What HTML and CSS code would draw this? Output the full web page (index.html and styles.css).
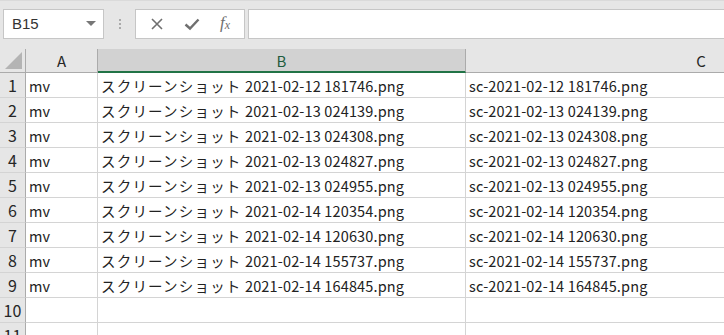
FILE: index.html
```html
<!DOCTYPE html>
<html lang="ja">

<head>
  <meta charset="UTF-8">
  <meta name="viewport" content="width=device-width, initial-scale=1.0">
  <title>Sheet</title>
  <link rel="stylesheet" href="styles.css">
</head>

<body>
  <div class="bar">
    <div class="namebox">
      <span>B15</span>
      <span class="caret"></span>
    </div>
    <div class="grip"><i></i><i></i><i></i></div>
    <div class="fbtns">
      <svg width="14" height="14" viewBox="0 0 14 14"><path d="M2 2 L12 12 M12 2 L2 12" stroke="#6f6f6f" stroke-width="1.6" fill="none"/></svg>
      <svg width="16" height="14" viewBox="0 0 16 14"><path d="M1.5 7.5 L6 11.5 L14.5 2.5" stroke="#6f6f6f" stroke-width="2.4" fill="none"/></svg>
      <span class="fx">f<sub>x</sub></span>
    </div>
    <div class="finput"></div>
  </div>

  <div class="sheet">
    <div class="hd corner"><span class="tri"></span></div>
    <div class="hd">A</div>
    <div class="hd sel">B</div>
    <div class="hd col-c">C</div>

    <div class="rn">1</div><div class="c">mv</div><div class="c"><span class="k">スクリーンショット</span> 2021-02-12 181746.png</div><div class="c">sc-2021-02-12 181746.png</div>
    <div class="rn">2</div><div class="c">mv</div><div class="c"><span class="k">スクリーンショット</span> 2021-02-13 024139.png</div><div class="c">sc-2021-02-13 024139.png</div>
    <div class="rn">3</div><div class="c">mv</div><div class="c"><span class="k">スクリーンショット</span> 2021-02-13 024308.png</div><div class="c">sc-2021-02-13 024308.png</div>
    <div class="rn">4</div><div class="c">mv</div><div class="c"><span class="k">スクリーンショット</span> 2021-02-13 024827.png</div><div class="c">sc-2021-02-13 024827.png</div>
    <div class="rn">5</div><div class="c">mv</div><div class="c"><span class="k">スクリーンショット</span> 2021-02-13 024955.png</div><div class="c">sc-2021-02-13 024955.png</div>
    <div class="rn">6</div><div class="c">mv</div><div class="c"><span class="k">スクリーンショット</span> 2021-02-14 120354.png</div><div class="c">sc-2021-02-14 120354.png</div>
    <div class="rn">7</div><div class="c">mv</div><div class="c"><span class="k">スクリーンショット</span> 2021-02-14 120630.png</div><div class="c">sc-2021-02-14 120630.png</div>
    <div class="rn">8</div><div class="c">mv</div><div class="c"><span class="k">スクリーンショット</span> 2021-02-14 155737.png</div><div class="c">sc-2021-02-14 155737.png</div>
    <div class="rn">9</div><div class="c">mv</div><div class="c"><span class="k">スクリーンショット</span> 2021-02-14 164845.png</div><div class="c">sc-2021-02-14 164845.png</div>
    <div class="rn">10</div><div class="c"></div><div class="c"></div><div class="c"></div>
    <div class="rn">11</div><div class="c"></div><div class="c"></div><div class="c"></div>
  </div>
</body>

</html>
```

FILE: styles.css
```css
* {
  box-sizing: border-box;
}

body {
  margin: 0;
  width: 724px;
  height: 335px;
  overflow: hidden;
  background: #fff;
  font-family: "Noto Sans CJK JP", "Liberation Sans", sans-serif;
  color: #222;
}

.bar {
  display: flex;
  align-items: center;
  height: 49px;
  padding: 0 0 3px 3px;
  background: #e6e6e6;
  border-top: 1px solid #dadada;
}

.namebox {
  display: flex;
  align-items: center;
  justify-content: space-between;
  width: 101px;
  height: 30px;
  padding: 0 7px 0 8px;
  background: #fff;
  border: 1px solid #c6c6c6;
  font-family: "Liberation Sans", sans-serif;
  font-size: 15px;
  color: #333;
}

.caret {
  width: 0;
  height: 0;
  border-left: 5px solid transparent;
  border-right: 5px solid transparent;
  border-top: 5px solid #777;
}

.grip {
  display: flex;
  flex-direction: column;
  gap: 2px;
  width: 31px;
  align-items: center;
}

.grip i {
  width: 2px;
  height: 2px;
  background: #aaa;
}

.fbtns {
  display: flex;
  align-items: center;
  justify-content: space-around;
  width: 110px;
  height: 30px;
  padding: 0 4px;
  background: #fff;
  border: 1px solid #c6c6c6;
}

.fx {
  font-family: "Liberation Serif", serif;
  font-style: italic;
  font-size: 17px;
  color: #6f6f6f;
  line-height: 1;
  margin-top: -3px;
}

.fx sub {
  font-size: 12px;
  vertical-align: -1px;
}

.finput {
  flex: 1;
  height: 30px;
  margin-left: 3px;
  background: #fff;
  border: 1px solid #c6c6c6;
  border-right: none;
}

.sheet {
  display: grid;
  grid-template-columns: 26px 72px 368px 470px;
  grid-template-rows: 24px;
  grid-auto-rows: 25px;
  font-size: 14.5px;
}

.hd {
  display: flex;
  align-items: center;
  justify-content: center;
  background: #e6e6e6;
  border-right: 1px solid #ababab;
  border-bottom: 1px solid #ababab;
  font-size: 15px;
  color: #262626;
}

.hd.sel {
  background: #d2d2d2;
  border-bottom: 2px solid #217346;
  color: #1e5c3c;
}

.hd.col-c {
  border-right: none;
}

.corner {
  position: relative;
}

.tri {
  position: absolute;
  right: 3px;
  bottom: 3px;
  width: 0;
  height: 0;
  border-left: 17px solid transparent;
  border-bottom: 17px solid #b4b4b4;
}

.rn {
  display: flex;
  align-items: center;
  justify-content: center;
  background: #e6e6e6;
  border-right: 1px solid #ababab;
  border-bottom: 1px solid #d4d4d4;
  font-size: 16px;
  color: #262626;
}

.c {
  display: flex;
  align-items: center;
  padding-left: 3px;
  white-space: pre;
  overflow: hidden;
  border-right: 1px solid #d4d4d4;
  border-bottom: 1px solid #d4d4d4;
  letter-spacing: 0.15px;
}

.k {
  letter-spacing: 1.2px;
}
```
